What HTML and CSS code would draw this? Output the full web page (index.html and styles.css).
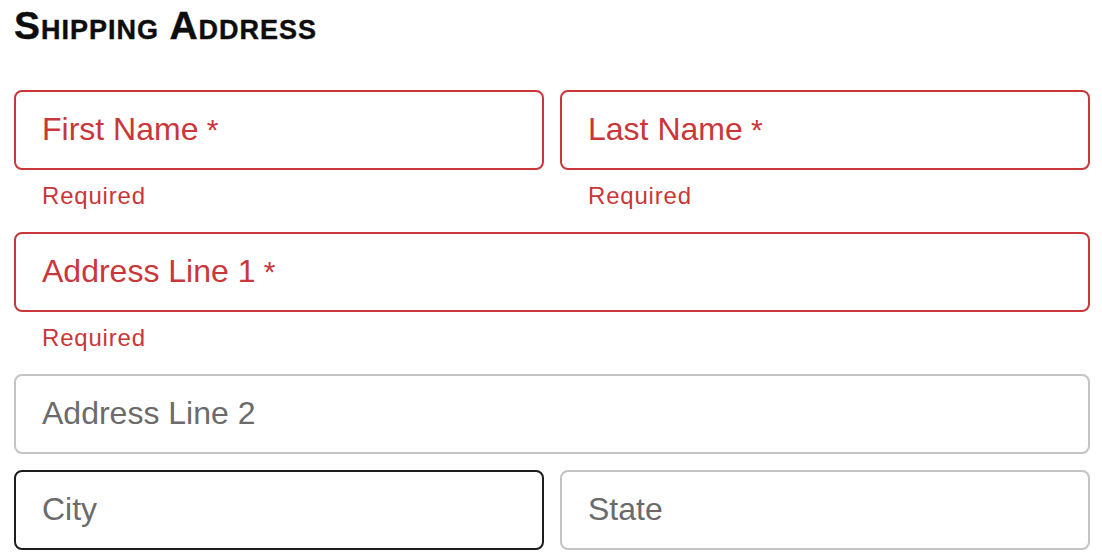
FILE: index.html
```html
<!DOCTYPE html>
<html lang="en">
<head>
<meta charset="utf-8">
<title>Shipping Address</title>
<link rel="stylesheet" href="styles.css">
</head>
<body>
<div class="page">
  <h1 class="title">Shipping Address</h1>
  <div class="form">
    <div class="field">
      <div class="box error"><span class="label">First Name<span class="req"> *</span></span></div>
      <div class="helper">Required</div>
    </div>
    <div class="field">
      <div class="box error"><span class="label">Last Name<span class="req"> *</span></span></div>
      <div class="helper">Required</div>
    </div>
    <div class="field full">
      <div class="box error"><span class="label">Address Line 1<span class="req"> *</span></span></div>
      <div class="helper">Required</div>
    </div>
    <div class="field full">
      <div class="box"><span class="label">Address Line 2</span></div>
    </div>
    <div class="field">
      <div class="box hover"><span class="label">City</span></div>
    </div>
    <div class="field">
      <div class="box"><span class="label">State</span></div>
    </div>
  </div>
</div>
</body>
</html>
```
FILE: styles.css
```css
* { box-sizing: border-box; }
html, body { margin: 0; padding: 0; background: #ffffff; }
body { font-family: "Liberation Sans", Arial, Helvetica, sans-serif; }

.page {
  padding: 6px 12px 0 14px;
}

.title {
  margin: 0 0 45px 0;
  font-size: 39px;
  line-height: 39px;
  font-weight: 700;
  font-variant: small-caps;
  color: #0d0d0d;
  letter-spacing: 1px;
  -webkit-text-stroke: 0.4px #0d0d0d;
}

.form {
  display: grid;
  grid-template-columns: 1fr 1fr;
  column-gap: 16px;
  row-gap: 16px;
}

.field.full { grid-column: 1 / span 2; }

.box {
  height: 80px;
  border: 2px solid #c4c4c4;
  border-radius: 8px;
  padding: 0 26px;
  display: flex;
  align-items: center;
}

.box.error { border-color: #c9373a; }
.box.hover { border-color: #1c1c1c; }

.label {
  font-size: 32px;
  line-height: 36px;
  color: #6b6b6b;
  white-space: nowrap;
  margin-top: -2px;
}

.box.error .label { color: #c9373a; }

.req { font-size: 30px; }

.helper {
  margin: 11px 0 5px 0;
  padding-left: 28px;
  height: 30px;
  line-height: 30px;
  font-size: 24px;
  letter-spacing: 0.8px;
  color: #c9373a;
}
```
